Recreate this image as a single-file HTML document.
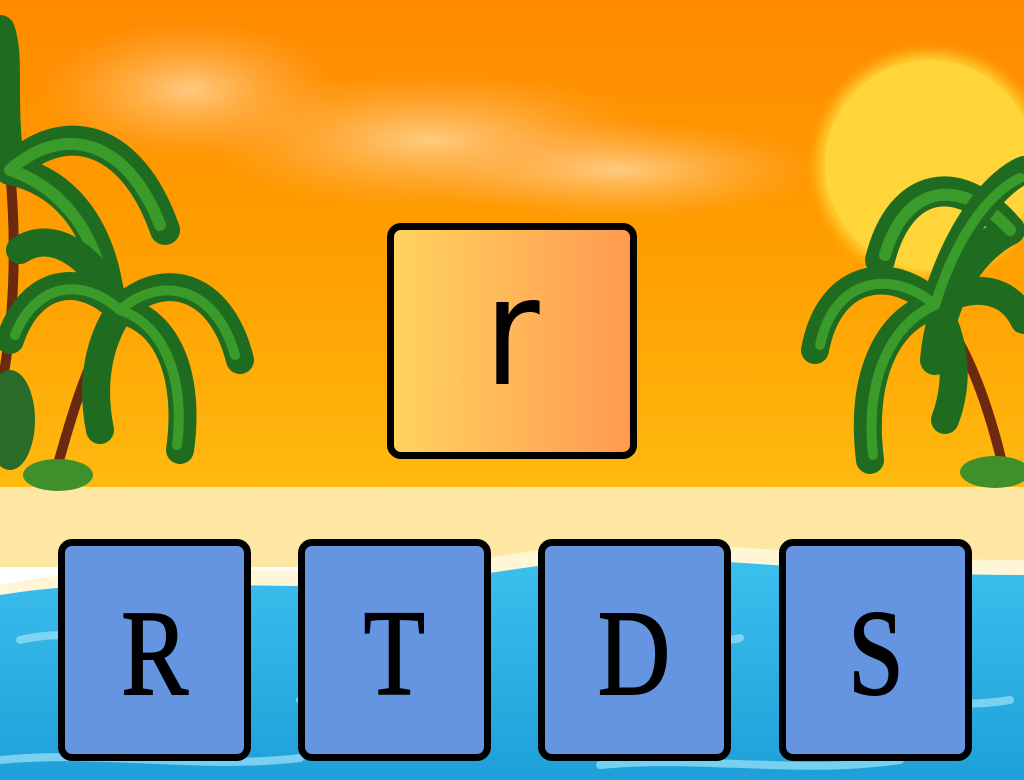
<!DOCTYPE html>
<html><head><meta charset="utf-8"><style>
html,body{margin:0;padding:0;width:1024px;height:780px;overflow:hidden}
body{position:relative}
svg.bg{position:absolute;left:0;top:0}
.card{position:absolute;box-sizing:border-box;border:7px solid #000;border-radius:14px;display:flex;align-items:center;justify-content:center}
.top{left:387px;top:223px;width:250px;height:236px;background:linear-gradient(90deg,#ffd35e,#ff9a52);font-size:150px;line-height:1;color:#000}
.top span{position:relative;top:-8px;font-family:"DejaVu Sans","Liberation Sans",sans-serif;display:inline-block;transform:scaleX(.9)}
.b{top:539px;width:193px;height:222px;background:#6595e0;font-family:"Liberation Serif",serif;font-weight:normal;font-size:122px;color:#000}
.b span{position:relative;top:4px;display:inline-block;transform:scaleX(.82);-webkit-text-stroke:2px #000}
</style></head><body>
<svg class="bg" width="1024" height="780" viewBox="0 0 1024 780">
<defs>
<linearGradient id="sky" x1="0" y1="0" x2="0" y2="1">
<stop offset="0" stop-color="#ff8a00"/><stop offset=".55" stop-color="#ffa000"/><stop offset="1" stop-color="#ffba10"/></linearGradient>
<linearGradient id="sea" x1="0" y1="0" x2="0" y2="1">
<stop offset="0" stop-color="#3cc0ee"/><stop offset="1" stop-color="#1f9fd8"/></linearGradient>
<radialGradient id="cl" cx=".5" cy=".5" r=".5"><stop offset="0" stop-color="#ffd9a0" stop-opacity=".8"/><stop offset="1" stop-color="#ffb060" stop-opacity="0"/></radialGradient>
<filter id="bl"><feGaussianBlur stdDeviation="6"/></filter>
</defs>
<rect width="1024" height="490" fill="url(#sky)"/>
<ellipse cx="190" cy="90" rx="150" ry="70" fill="url(#cl)"/>
<ellipse cx="430" cy="140" rx="230" ry="70" fill="url(#cl)"/>
<ellipse cx="620" cy="170" rx="200" ry="50" fill="url(#cl)"/>
<circle cx="930" cy="165" r="112" fill="#ffd030" filter="url(#bl)"/>
<circle cx="930" cy="165" r="105" fill="#ffd53a"/>
<rect y="487" width="1024" height="80" fill="#fde7a3"/>
<path d="M0 585 C120 560 250 575 380 570 C520 560 560 535 700 545 C820 552 900 560 1024 560 L1024 780 L0 780Z" fill="#fff6d8"/>
<path d="M0 595 C120 575 250 590 380 585 C520 575 560 552 700 560 C820 568 900 575 1024 575 L1024 780 L0 780Z" fill="url(#sea)"/>
<g fill="none" stroke="#8fdcf6" stroke-width="8" stroke-linecap="round" opacity=".8">
<path d="M20 640 C80 625 140 650 200 640"/><path d="M300 700 C360 690 420 710 480 695"/>
<path d="M560 640 C620 630 690 650 740 638"/><path d="M820 700 C880 690 940 712 1010 700"/>
<path d="M0 760 C100 750 200 770 300 758"/><path d="M600 765 C700 755 800 775 900 760"/>
</g>
<g stroke-linecap="round" fill="none">
<path d="M-20 470 C10 380 20 280 10 170" stroke="#6b2a10" stroke-width="10"/>
<g stroke="#1f6b1f" stroke-width="30">
<path d="M10 170 C60 120 130 130 165 230"/>
<path d="M10 170 C60 180 100 220 110 300"/>
<path d="M10 170 C0 100 10 60 0 30"/>
</g>
<g stroke="#3a9a2a" stroke-width="12">
<path d="M10 170 C60 125 125 135 160 225"/>
<path d="M10 170 C55 185 95 225 105 295"/>
</g>
<path d="M55 475 C70 420 90 350 120 310" stroke="#6b2a10" stroke-width="10"/>
<g stroke="#1f6b1f" stroke-width="28">
<path d="M120 310 C160 270 220 280 240 360"/>
<path d="M120 310 C170 320 190 380 180 450"/>
<path d="M120 310 C100 340 90 380 100 430"/>
<path d="M120 310 C80 270 30 280 10 340"/>
<path d="M120 310 C90 250 50 230 20 250"/>
</g>
<g stroke="#3a9a2a" stroke-width="10">
<path d="M120 310 C160 275 215 285 235 355"/>
<path d="M120 310 C165 325 185 380 177 445"/>
<path d="M120 310 C80 275 35 285 15 335"/>
</g>
<g stroke="#1f6b1f" stroke-width="30">
<path d="M1010 230 C960 170 900 180 880 260"/>
<path d="M1010 230 C970 250 940 300 935 360"/>
</g>
<g stroke="#3a9a2a" stroke-width="12">
<path d="M1010 230 C960 175 905 185 885 255"/>
</g>
<path d="M1005 475 C990 410 970 350 935 305" stroke="#6b2a10" stroke-width="10"/>
<g stroke="#1f6b1f" stroke-width="28">
<path d="M935 305 C895 265 830 270 815 350"/>
<path d="M935 305 C885 320 860 380 870 460"/>
<path d="M935 305 C955 340 960 380 945 420"/>
<path d="M935 305 C960 220 1000 180 1024 170"/>
<path d="M935 305 C975 280 1010 290 1024 320"/>
</g>
<g stroke="#3a9a2a" stroke-width="10">
<path d="M935 305 C895 270 835 275 820 345"/>
<path d="M935 305 C890 325 865 380 873 455"/>
<path d="M935 305 C960 225 995 190 1020 178"/>
</g>
</g>
<ellipse cx="58" cy="475" rx="35" ry="16" fill="#3f8f2a"/>
<ellipse cx="10" cy="420" rx="25" ry="50" fill="#2a6b2a"/>
<ellipse cx="995" cy="472" rx="35" ry="16" fill="#3f8f2a"/>
</svg>
<div class="card top"><span>r</span></div>
<div class="card b" style="left:58px"><span>R</span></div>
<div class="card b" style="left:298px"><span>T</span></div>
<div class="card b" style="left:538px"><span>D</span></div>
<div class="card b" style="left:779px"><span>S</span></div>
</body></html>
